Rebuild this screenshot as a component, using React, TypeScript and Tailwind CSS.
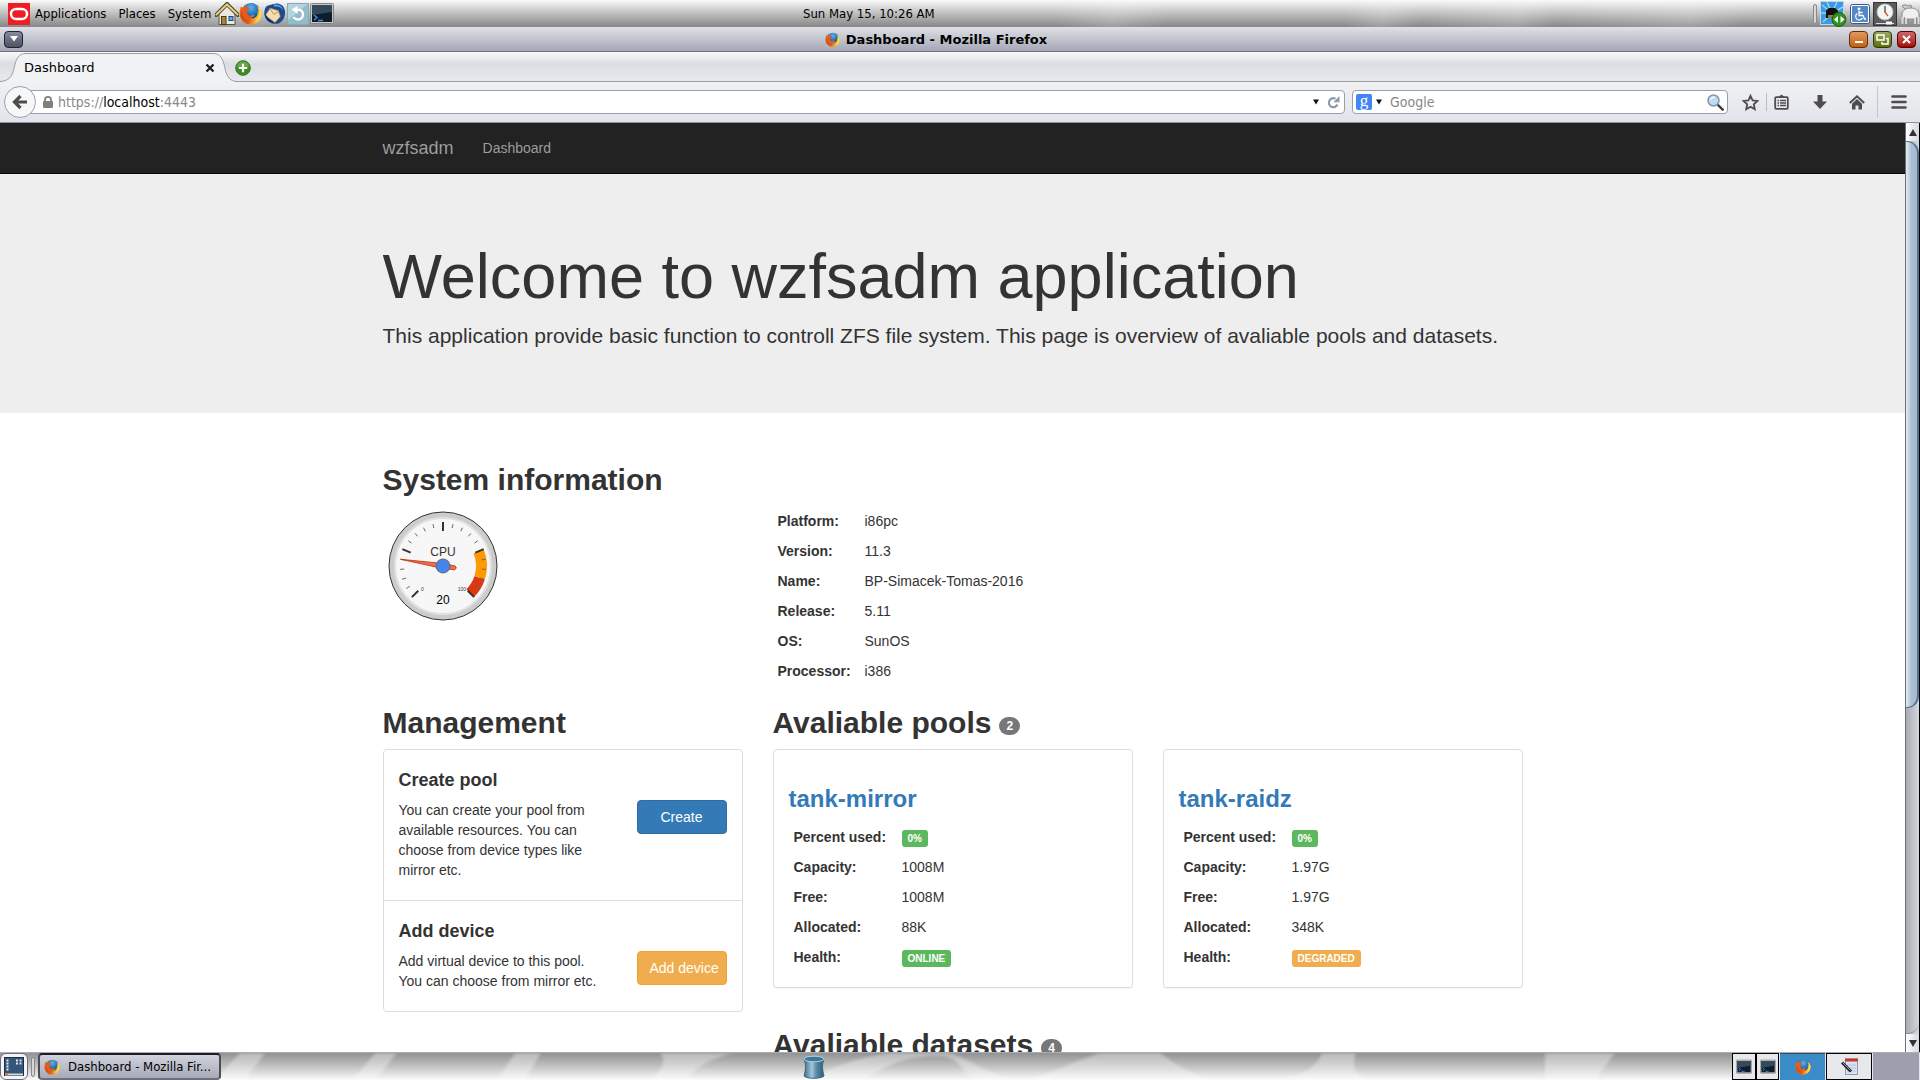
import React from "react";

/* ---------- icons ---------- */

function FirefoxIcon({ size }: { size: number }) {
  return (
    <svg width={size} height={size} viewBox="0 0 24 24" aria-hidden="true" className="shrink-0">
      <defs>
        <radialGradient id="ffGlobe" cx="0.5" cy="0.25" r="0.8">
          <stop offset="0" stopColor="#5fb4e8" />
          <stop offset="0.5" stopColor="#1d6cb5" />
          <stop offset="1" stopColor="#0b2355" />
        </radialGradient>
        <linearGradient id="ffTail" x1="0" y1="0" x2="1" y2="0.3">
          <stop offset="0" stopColor="#e8641a" />
          <stop offset="0.6" stopColor="#e4571a" />
          <stop offset="1" stopColor="#ffd23a" />
        </linearGradient>
      </defs>
      <circle cx="12.5" cy="11" r="10" fill="url(#ffGlobe)" />
      <path
        d="M2.2 4.6c.7.9 1.5 1.2 2.4 1.2C6 4.3 7.6 3.6 9 3.5 8.2 4.300 7.900 5.300 8.100 6.100c.9.3 2 .2 2.900.4-.1 1.200-1 1.700-2.300 2.300-.2.800.3 1.800-.500 2.700.9 2.700 3.200 3.400 5.300 2.400 1-.5 2-.4 2.400.3-1 1.700-3 2.400-4.700 2.100 3 1.500 6.600.3 7.800-2.500.7-1.800.5-3.300.1-4.600.6.400 1 .8 1.300 1.400.1-3-.9-5.300-2.800-7.300 3.800 2.200 6.100 6 5.600 10.300C22.500 19.500 17.800 23.500 12 23.500 5.600 23.500.700 18.700.700 12.300.700 9.400 1.200 6.700 2.200 4.600z"
        fill="url(#ffTail)"
      />
      <path d="M20.400 7.500c2 5.200.4 10.500-4.200 13.300 4.500-1 7-4.700 7-8.900 0-2.700-1.100-5-2.700-7z" fill="#ffdc4a" />
      <path d="M3.500 10c-.6 5 2 9.300 6.500 10.700C5.400 20.700 2 17 2 12.500z" fill="#b8331b" opacity="0.6" />
    </svg>
  );
}

function OracleIcon() {
  return (
    <svg width="22" height="22" viewBox="0 0 22 22" aria-hidden="true">
      <rect width="22" height="22" fill="#ee1c23" />
      <rect x="3" y="6" width="16" height="10" rx="5" fill="none" stroke="#fff" strokeWidth="2.500" />
    </svg>
  );
}

function HouseIcon() {
  return (
    <svg width="24" height="24" viewBox="0 0 24 24" aria-hidden="true">
      <path d="M4 11 12 3.500l8 7.500v11.500H4z" fill="#e9e9df" stroke="#55533f" />
      <path d="M1 13 12 2l11 11" fill="none" stroke="#4b4526" strokeWidth="4" strokeLinecap="round" />
      <path d="M1.500 12.500 12 2.500l10.500 10" fill="none" stroke="#e6d08a" strokeWidth="2" strokeLinecap="round" />
      <rect x="6.500" y="14.500" width="4.500" height="8" fill="#a88240" stroke="#4b3a16" />
      <rect x="14" y="14.500" width="4" height="4" fill="#6fa3d8" stroke="#234d80" />
    </svg>
  );
}

function ThunderbirdIcon() {
  return (
    <svg width="23" height="23" viewBox="0 0 24 24" aria-hidden="true">
      <path d="M12 2c4-1.500 9 1 10.500 5.500C24 13 22 20 16 22.500c-4 1-9-.5-12-3.500-3-4-3.500-9-1.500-13C3.500 4 6 3 12 2z" fill="#1b4a92" />
      <path d="M11 3c5-1.500 9 1 10 6-2-4-6-5-9-4z" fill="#5fa4dd" />
      <path d="m2.500 14 5-7.500 8.500 2.500 2 6-5.500 6.500z" fill="#f3ddb2" stroke="#c9974e" strokeWidth="0.700" />
      <path d="m7 7 4.500 6 5-3.500" fill="none" stroke="#c08a3d" />
      <path d="M1.500 12c1 6 6 10.500 13 9.500-5-.5-9-3.500-11-7.500z" fill="#10285c" />
    </svg>
  );
}

function RefreshTileIcon() {
  return (
    <svg width="22" height="22" viewBox="0 0 22 22" aria-hidden="true">
      <rect x="0.500" y="0.500" width="21" height="21" fill="#93bcca" stroke="#86abb8" />
      <path d="M1 1h20L1 17z" fill="#b4d3dc" />
      <path d="M8.500 7.500c3.500-2 7.500.3 7.500 4 0 3-2.300 5-5 5-1.800 0-3.500-.9-4.500-2.500" fill="none" stroke="#fff" strokeWidth="2.300" />
      <path d="m10.500 3-6 3.500 6 4.500z" fill="#fff" />
    </svg>
  );
}

function TerminalIcon({ size }: { size: number }) {
  return (
    <svg width={size} height={size} viewBox="0 0 24 24" aria-hidden="true">
      <rect x="0.500" y="1.500" width="23" height="20" rx="1" fill="#c9c9c5" stroke="#85857f" />
      <rect x="2" y="3" width="20" height="17" fill="#0e1c2b" />
      <path d="M2 3h20v7L2 13z" fill="#34495c" />
      <path d="m4 13 3 2.500L4 18M8 18.500h5" fill="none" stroke="#3e97e6" strokeWidth="1.300" />
    </svg>
  );
}

function NetworkIcon() {
  return (
    <svg width="27" height="26" viewBox="0 0 27 26" aria-hidden="true">
      <rect x="0.500" y="0.500" width="23" height="23" fill="#3a9be0" stroke="#bcd9ec" />
      <path d="M12 12 2 4M12 12 7 1M12 12l5-11M12 12l11-6M12 12 1 12M12 12l-9 9" stroke="#9ad0f2" strokeWidth="1.500" />
      <path d="M6 9.500 9 7h6l3 2.500V17H6z" fill="#111" />
      <rect x="8" y="14" width="7" height="3" fill="#9a7a3c" />
      <circle cx="19" cy="18.500" r="7" fill="#2f9220" stroke="#1c6412" />
      <path d="m18 15-4 3.500 4 3.500zM20.500 15l4 3.500-4 3.500z" fill="#fff" />
    </svg>
  );
}

function AccessibilityIcon() {
  return (
    <svg width="20" height="20" viewBox="0 0 20 20" aria-hidden="true">
      <rect x="0.500" y="0.500" width="19" height="19" rx="2" fill="#fff" stroke="#2f5b96" />
      <rect x="2" y="2" width="16" height="16" rx="1" fill="#5787c2" />
      <circle cx="9" cy="4.800" r="1.400" fill="#fff" />
      <path d="M9 6.500v5h4l1.500 3.500h1.500M9 8.500h3.500" fill="none" stroke="#fff" strokeWidth="1.300" />
      <path d="M7.300 9.500a3.500 3.500 0 1 0 5 4.500" fill="none" stroke="#fff" strokeWidth="1.200" />
    </svg>
  );
}

function TimeSliderIcon() {
  return (
    <svg width="24" height="24" viewBox="0 0 24 24" aria-hidden="true">
      <rect x="0.500" y="0.500" width="23" height="23" fill="#5b5b5b" stroke="#333" />
      <circle cx="12" cy="10" r="8" fill="#f4f4f2" stroke="#bbb" />
      <path d="M12 4v6.500" stroke="#444" strokeWidth="1.300" />
      <path d="m12 10 3 4" stroke="#d4552c" strokeWidth="1.300" />
      <path d="M3 21.500h18" stroke="#ddd" />
      <rect x="13" y="19.500" width="6" height="3" fill="#fff" />
    </svg>
  );
}

function PackageIcon() {
  return (
    <svg width="20" height="24" viewBox="0 0 20 24" aria-hidden="true">
      <path d="M2 4c3-3 6 1 9-1l1 5H6z" fill="#c9c9c6" stroke="#8d8d8a" />
      <path d="M2 13c0-5 4-7 9-7s8 3 8 7v4H2z" fill="#f0f0ee" stroke="#8d8d8a" />
      <path d="M2.500 15v7M6 16v6M15 16v6M18.500 15v7" stroke="#d8d8d5" strokeWidth="2" />
      <path d="M4.500 15v7M8 17v3h5v-3M16.700 15v7M1 22.500h18" fill="none" stroke="#8d8d8a" />
    </svg>
  );
}

function TrashIcon() {
  return (
    <svg width="22" height="24" viewBox="0 0 22 24" aria-hidden="true">
      <defs>
        <linearGradient id="bin" x1="0" x2="1">
          <stop offset="0" stopColor="#3d6c88" />
          <stop offset="0.400" stopColor="#a4c8da" />
          <stop offset="0.600" stopColor="#5d8da8" />
          <stop offset="1" stopColor="#2f5a75" />
        </linearGradient>
      </defs>
      <path d="M1 4c2 5 2 10 0 17 3 3 17 3 20 0-2-7-2-12 0-17z" fill="url(#bin)" stroke="#3a6580" />
      <ellipse cx="11" cy="4" rx="10" ry="2.800" fill="#3c7797" stroke="#b4d3e0" />
    </svg>
  );
}

function DesktopIcon() {
  return (
    <svg width="20" height="20" viewBox="0 0 20 20" aria-hidden="true">
      <rect x="0.500" y="0.500" width="19" height="18" fill="#34567a" stroke="#1d3046" />
      <path d="M2.500 3.500h2M2.500 6.500h2M2.500 9.500h2M2.500 12.500h2M12 3.500h2M15.500 3.500h2M12 6.500h2M15.500 6.500h2" stroke="#dfe8f1" strokeWidth="1.800" />
      <path d="M1 17.500h18" stroke="#d8d8d0" strokeWidth="2" />
      <rect x="1" y="16.500" width="3" height="2" fill="#e07b2a" />
    </svg>
  );
}

function NotesIcon() {
  return (
    <svg width="17" height="17" viewBox="0 0 17 17" aria-hidden="true">
      <rect x="4.500" y="1" width="12" height="15.500" fill="#d7e3f5" stroke="#8c9bb5" />
      <rect x="4" y="0.500" width="13" height="3" fill="#c0392f" />
      <path d="M6 7h9M6 10h9M6 13h9" stroke="#b4c6e4" />
      <path d="m1 4.500 9 9" stroke="#222" strokeWidth="3" />
      <path d="m1.500 4.500 8 8" stroke="#999" />
    </svg>
  );
}

const BackIcon = () => (
  <svg width="16" height="16" viewBox="0 0 16 16" aria-hidden="true">
    <path d="M8.500 2 2.500 8l6 6M3 8h12" fill="none" stroke="#4d4d4d" strokeWidth="3.200" />
  </svg>
);

const LockIcon = () => (
  <svg width="10" height="12" viewBox="0 0 10 12" aria-hidden="true">
    <rect y="5" width="10" height="7" rx="1" fill="#808080" />
    <path d="M2 6V3.500a3 2.600 0 0 1 6 0V6" fill="none" stroke="#808080" strokeWidth="1.800" />
  </svg>
);

const CaretIcon = () => (
  <svg width="6" height="6" viewBox="0 0 6 6" aria-hidden="true">
    <path d="M0 .500h6L3 5.500z" fill="#111" />
  </svg>
);

const ReloadIcon = () => (
  <svg width="13" height="13" viewBox="0 0 13 13" aria-hidden="true">
    <path d="M10.500 8.500A4.500 4.500 0 1 1 8.500 2.700" fill="none" stroke="#8e9bac" strokeWidth="2.200" />
    <path d="M12.500 0v6.200H6.300z" fill="#8e9bac" />
  </svg>
);

const SearchIcon = () => (
  <svg width="17" height="17" viewBox="0 0 17 17" aria-hidden="true">
    <path d="m10.500 10.500 5.200 5.200" stroke="#3a3a3a" strokeWidth="2.400" strokeLinecap="round" />
    <circle cx="6.500" cy="6.500" r="5.500" fill="#bcdcf4" stroke="#8895a5" strokeWidth="1.500" />
    <path d="M3.500 5.500a3.500 3.500 0 0 1 4-2" fill="none" stroke="#fff" strokeWidth="1.400" />
  </svg>
);

const StarIcon = () => (
  <svg width="17" height="17" viewBox="0 0 17 17" aria-hidden="true">
    <path d="m8.500 1.800 2.100 4.500 4.800.6-3.600 3.400 1 4.900-4.300-2.500-4.300 2.500 1-4.900L1.600 6.900l4.800-.6z" fill="none" stroke="#4d4d4d" strokeWidth="1.800" />
  </svg>
);

const ClipboardIcon = () => (
  <svg width="15" height="16" viewBox="0 0 15 16" aria-hidden="true">
    <rect x="1.200" y="3.200" width="12.600" height="11.600" rx="1" fill="none" stroke="#4d4d4d" strokeWidth="1.800" />
    <path d="M5 2.500 7.500.500 10 2.500V4H5z" fill="#4d4d4d" />
    <path d="M3.500 6.500h1.500M6 6.500h6M3.500 9h1.500M6 9h6M3.500 11.500h1.500M6 11.500h6" stroke="#4d4d4d" strokeWidth="1.300" />
  </svg>
);

const DownIcon = () => (
  <svg width="14" height="14" viewBox="0 0 14 14" aria-hidden="true">
    <path d="M4.500 0h5v6.500H14L7 14 0 6.500h4.500z" fill="#4d4d4d" />
  </svg>
);

const HomeIcon = () => (
  <svg width="16" height="15" viewBox="0 0 16 15" aria-hidden="true">
    <path d="M.8 8 8 1.300 15.200 8" fill="none" stroke="#4d4d4d" strokeWidth="1.900" />
    <path d="m8 4 5 4.800V14.500H9.500V10.500h-3v4H3V8.800z" fill="#4d4d4d" />
  </svg>
);

const MenuIcon = () => (
  <svg width="16" height="14" viewBox="0 0 16 14" aria-hidden="true">
    <path d="M1.500 1.500h13M1.500 7h13M1.500 12.500h13" stroke="#4d4d4d" strokeWidth="2.600" strokeLinecap="round" />
  </svg>
);

/* ---------- desktop panels ---------- */

const Handle = () => <span className="h-5 w-1 shrink-0 rounded-sm border border-[#8a8a8a] bg-[#d6d6d6]" />;

function TopPanel() {
  return (
    <header className="relative h-[27px] shrink-0 bg-linear-to-b from-[#fafafa] via-[#bfbfbf] to-[#868686] font-['DejaVu_Sans_Condensed','DejaVu_Sans',sans-serif] text-[13px] leading-[27px] text-black [font-stretch:condensed]">
      <div className="absolute inset-0 bg-[linear-gradient(100deg,transparent_8%,#ffffff30_13%,transparent_18%,transparent_55%,#ffffff30_58%,transparent_61%,transparent_70%,#ffffff30_72%,transparent_74%,#ffffff30_79%,transparent_81%,#ffffff30_88%,transparent_91%)]" />
      <div className="relative grid h-full grid-cols-[803fr_1117fr]">
        <div className="flex items-center pl-2">
          <OracleIcon />
          <nav className="ml-[5px] flex gap-3" aria-label="Desktop">
            <button>Applications</button>
            <button>Places</button>
            <button>System</button>
          </nav>
          <div className="ml-1 flex items-center">
            <button aria-label="Home folder"><HouseIcon /></button>
            <button aria-label="Firefox"><FirefoxIcon size={23} /></button>
            <button aria-label="Mail" className="ml-px"><ThunderbirdIcon /></button>
            <button aria-label="Updates" className="mx-px"><RefreshTileIcon /></button>
            <button aria-label="Terminal"><TerminalIcon size={24} /></button>
          </div>
        </div>
        <div className="flex items-center justify-between">
          <time>Sun May 15, 10:26 AM</time>
          <div className="flex items-center gap-[3px]">
            <Handle />
            <NetworkIcon />
            <AccessibilityIcon />
            <TimeSliderIcon />
            <PackageIcon />
          </div>
        </div>
      </div>
    </header>
  );
}

function BottomPanel() {
  return (
    <footer className="relative h-7 shrink-0 overflow-hidden border-t border-[#a9aeb6] bg-linear-to-b from-[#909293] via-[#c3c3c3] via-50% to-[#fbfbfb]">
      <svg className="absolute inset-0 h-full w-full" viewBox="0 0 1920 27" preserveAspectRatio="none" aria-hidden="true">
        <defs>
          <filter id="soft" x="-5%" y="-50%" width="110%" height="200%">
            <feGaussianBlur stdDeviation="1.500" />
          </filter>
        </defs>
        <g fill="#fff" opacity="0.350" filter="url(#soft)">
          <path d="M240 0h25l-20 27h-30zM375 0h22l-22 27h-22zM515 0h26l-16 27h-28zM660 0c8 9 0 20-10 27h35c10-12 25-22 50-27z" />
          <path d="M865 27c25-18 45-24 75-24 20 0 22 18 35 24h240c-25-5-40-16-55-27h-60c-35 12-55 24-80 27-30-3-40-16-70-27h-60c-30 4-60 14-80 27z" />
          <path d="M1322 0h34c-5 14 0 22 10 27h-90c28-4 40-12 46-27zM1545 0h70l-20 27h-50z" />
        </g>
      </svg>
      <div className="relative grid h-full grid-cols-[803fr_1117fr]">
        <div className="flex items-center gap-[3px]">
          <button aria-label="Show desktop" className="flex h-[27px] w-7 items-center justify-center rounded-md border border-[#6b6f7c] bg-[#f4f4f6]">
            <DesktopIcon />
          </button>
          <Handle />
          <button className="flex h-[27px] w-[183px] items-center gap-2 rounded border-2 border-[#1c1e26] border-x-[#4a4d58] border-b-[#6d707c] bg-linear-to-b from-[#d0d3dc] to-[#a7abb8] pl-1 font-['DejaVu_Sans_Condensed','DejaVu_Sans',sans-serif] text-[13px] whitespace-nowrap text-black [font-stretch:condensed]">
            <FirefoxIcon size={16} />
            Dashboard - Mozilla Fir...
          </button>
        </div>
        <div className="flex items-center justify-between">
          <button aria-label="Trash"><TrashIcon /></button>
          <div className="flex h-full bg-[#e7e8ec]">
            <button aria-label="Workspace 1" className="flex">
              <span className="flex h-full w-6 items-center justify-center border border-black"><TerminalIcon size={16} /></span>
              <span className="flex h-full w-[23px] items-center justify-center border border-black"><TerminalIcon size={16} /></span>
            </button>
            <button aria-label="Workspace 2" className="mx-px flex w-[45px] items-center justify-center border-t border-[#3c4752] bg-[#3a8bc6]"><FirefoxIcon size={16} /></button>
            <button aria-label="Workspace 3" className="flex w-[46px] items-center justify-center border border-black"><NotesIcon /></button>
            <button aria-label="Workspace 4" className="mx-px w-[46px] bg-[#9d9eae]" />
          </div>
        </div>
      </div>
    </footer>
  );
}

/* ---------- browser chrome ---------- */

function TitleBar() {
  return (
    <div className="flex h-[25px] shrink-0 items-center border-b border-[#6d7080] bg-linear-to-b from-[#dfe1e6] to-[#a5a8b5] px-1">
      <button aria-label="Window menu" className="flex h-[17px] w-[19px] items-center justify-center rounded border border-[#20242e] bg-linear-to-b from-[#868c9e] to-[#4c5264]">
        <svg width="8" height="6" viewBox="0 0 8 6" aria-hidden="true"><path d="M0 0h8L4 5.500z" fill="#fff" /></svg>
      </button>
      <div className="flex flex-1 items-center justify-center gap-1.5 pt-px">
        <FirefoxIcon size={15} />
        <span className="font-['DejaVu_Sans',sans-serif] text-[13px] leading-5 font-bold text-black">Dashboard - Mozilla Firefox</span>
      </div>
      <div className="flex gap-[5px]">
        <button aria-label="Minimize" className="flex h-[17px] w-[19px] items-end justify-center rounded border border-[#6d2c00] bg-linear-to-b from-[#dd9a5c] to-[#c35f00] pb-1">
          <span className="h-[2px] w-2 bg-white" />
        </button>
        <button aria-label="Restore" className="flex h-[17px] w-[19px] items-center justify-center rounded border border-[#2f3a00] bg-linear-to-b from-[#9aa85c] to-[#5b7000]">
          <svg width="13" height="11" viewBox="0 0 13 11" aria-hidden="true">
            <path d="M1 1h7v5H1zM10 4.500h2V10H6V8" fill="none" stroke="#fff" strokeWidth="1.500" />
          </svg>
        </button>
        <button aria-label="Close" className="flex h-[17px] w-[19px] items-center justify-center rounded border border-[#5a0000] bg-linear-to-b from-[#cf6666] to-[#a30000]">
          <svg width="9" height="9" viewBox="0 0 9 9" aria-hidden="true"><path d="m1 1 7 7M8 1 1 8" stroke="#fff" strokeWidth="2" /></svg>
        </button>
      </div>
    </div>
  );
}

function TabStrip() {
  return (
    <div className="relative flex h-[30px] shrink-0 bg-linear-to-b from-[#fafafb] via-[#dcdde2] via-40% to-[#e9eaed] font-['DejaVu_Sans',sans-serif] text-[13px] text-black shadow-[inset_0_-1px_0_#9b9da3]">
      <div className="relative w-[237px]">
        <svg className="absolute inset-0" width="237" height="30" viewBox="0 0 237 30" aria-hidden="true">
          <path d="M0 29.500c8-.5 12-4 14-13C16 6 19 1.500 26 1.500h187c7 0 10 4.500 12 15 2 9 5 12.500 12 13V30H0z" fill="#f1f2f4" />
          <path d="M0 29.500c8-.5 12-4 14-13C16 6 19 1.500 26 1.500h187c7 0 10 4.500 12 15 2 9 5 12.500 12 13" fill="none" stroke="#9b9da3" />
        </svg>
        <div className="relative flex h-full items-center justify-between pt-0.5 pr-[22px] pl-6">
          <span>Dashboard</span>
          <button aria-label="Close tab">
            <svg width="10" height="10" viewBox="0 0 10 10" aria-hidden="true"><path d="m1.500 1.500 7 7M8.500 1.500l-7 7" stroke="#222" strokeWidth="2.400" /></svg>
          </button>
        </div>
      </div>
      <button aria-label="New tab" className="-ml-0.5 pt-0.5">
        <svg width="16" height="16" viewBox="0 0 16 16" aria-hidden="true">
          <circle cx="8" cy="8" r="7.300" fill="#3a8e1f" stroke="#3c6f2c" />
          <path d="M2 7a6 5.500 0 0 1 12 0z" fill="#7fba66" opacity="0.600" />
          <path d="M8 3.800v8.400M3.800 8h8.400" stroke="#fff" strokeWidth="2.200" />
        </svg>
      </button>
    </div>
  );
}

const Divider = () => <span className="h-[18px] w-px bg-[#b9bcc4]" />;

function NavBar() {
  return (
    <div className="flex h-[41px] shrink-0 items-center border-b border-[#8f93a3] bg-linear-to-b from-[#f0f1f3] to-[#e2e4ea] pr-[13px] pl-1 font-['DejaVu_Sans_Condensed','DejaVu_Sans',sans-serif] text-[14px] [font-stretch:condensed]">
      <button aria-label="Back" className="relative z-10 flex size-8 shrink-0 items-center justify-center rounded-full border border-[#9aa0ae] bg-[#f6f7f9]">
        <BackIcon />
      </button>
      <div className="-ml-2 flex h-6 flex-1 items-center rounded-r-sm border border-[#999dac] bg-white pr-1 pl-[14px]">
        <LockIcon />
        <span className="ml-[5px] flex-1 text-[#888]">
          https://<span className="text-black">localhost</span>:4443
        </span>
        <button aria-label="History"><CaretIcon /></button>
        <button aria-label="Reload" className="ml-2"><ReloadIcon /></button>
      </div>
      <div className="ml-[7px] flex h-6 w-[376px] items-center rounded-sm border border-[#999dac] bg-white px-[3px]">
        <button aria-label="Search engine" className="flex items-center gap-1">
          <span className="flex size-4 items-center justify-center rounded-xs bg-[#4285f4] pb-1 font-['Liberation_Serif',serif] text-[17px] leading-none text-white">g</span>
          <CaretIcon />
        </button>
        <input aria-label="Search" placeholder="Google" className="ml-2 min-w-0 flex-1 outline-none placeholder:text-[#888]" />
        <button aria-label="Go"><SearchIcon /></button>
      </div>
      <div className="ml-[14px] flex items-center">
        <button aria-label="Bookmark"><StarIcon /></button>
        <span className="w-[7px]" />
        <Divider />
        <button aria-label="Bookmarks list" className="ml-[7px]"><ClipboardIcon /></button>
        <button aria-label="Downloads" className="ml-6"><DownIcon /></button>
        <button aria-label="Home page" className="mx-[22px]"><HomeIcon /></button>
      </div>
      <span className="-ml-2.5 h-8 w-px bg-[#c3c5cc]" />
      <button aria-label="Menu" className="ml-[13px]"><MenuIcon /></button>
    </div>
  );
}

function Scrollbar() {
  return (
    <div className="flex w-[15px] shrink-0 flex-col border-r border-l border-r-black border-l-[#6b6f76] bg-linear-to-r from-[#a9acb1] to-[#d4d7dc]" aria-hidden="true">
      <div className="flex h-[18px] items-center justify-center bg-linear-to-r from-white to-[#d5d7e2]">
        <svg width="8" height="7" viewBox="0 0 8 7"><path d="M4 0 8 7H0z" fill="#333" /></svg>
      </div>
      <div className="h-[61%] rounded-r-xl border-y border-r-2 border-[#56718a] bg-linear-to-r from-[#e6edf3] via-[#a9bfd3] via-50% to-[#a4bad0]" />
      <div className="flex-1 rounded-br-xl border-b border-[#8b8e94]" />
      <div className="flex h-[18px] items-center justify-center bg-linear-to-r from-white to-[#d5d7e2]">
        <svg width="8" height="7" viewBox="0 0 8 7"><path d="M0 0h8L4 7z" fill="#333" /></svg>
      </div>
    </div>
  );
}

/* ---------- web page ---------- */

const polar = (deg: number, r: number) => {
  const a = (deg * Math.PI) / 180;
  return `${(60 + r * Math.sin(a)).toFixed(2)} ${(60 - r * Math.cos(a)).toFixed(2)}`;
};

const band = (from: number, to: number) =>
  `M${polar(from, 44)}A44 44 0 0 1 ${polar(to, 44)}L${polar(to, 33)}A33 33 0 0 0 ${polar(from, 33)}z`;

function Gauge() {
  const ticks = Array.from({ length: 21 }, (_, i) => i);
  return (
    <svg width="120" height="120" viewBox="0 0 120 120" role="img" aria-label="CPU 20" className="font-['Liberation_Sans',sans-serif]">
      <circle cx="60" cy="60" r="54" fill="#ccc" stroke="#333" />
      <circle cx="60" cy="60" r="48" fill="#f7f7f7" stroke="#e0e0e0" strokeWidth="2" />
      <path d={band(67.5, 108)} fill="#ff9900" />
      <path d={band(108, 135)} fill="#dc3912" />
      {ticks.map((i) => {
        const deg = -135 + i * 13.5;
        const major = i % 5 === 0;
        return (
          <path
            key={i}
            d={`M${polar(deg, major ? 44 : 43)}L${polar(deg, major ? 35 : 39)}`}
            stroke={major ? "#333" : "#666"}
            strokeWidth={major ? 2 : 1}
          />
        );
      })}
      <text x="60" y="50" textAnchor="middle" fontSize="12" fill="#333">CPU</text>
      <text x="60" y="98" textAnchor="middle" fontSize="12" fill="#000">20</text>
      <text x="38" y="85" fontSize="5" fill="#333">0</text>
      <text x="83" y="85" textAnchor="end" fontSize="5" fill="#333">100</text>
      <g transform="rotate(-81 60 60)">
        <path d="M60 17 62.500 60 62 72q-2 3-4 0L57.500 60z" fill="#dc3912" fillOpacity="0.700" stroke="#c63310" strokeWidth="0.800" />
      </g>
      <circle cx="60" cy="60" r="7" fill="#4684ee" stroke="#666" />
    </svg>
  );
}

const Heading = ({ children, count }: { children: React.ReactNode; count?: number }) => (
  <h2 className="mt-5 mb-2.5 flex items-end text-[30px] leading-[33px] font-bold">
    {children}
    {count !== undefined && (
      <span className="mb-1 ml-2 rounded-[10px] bg-[#777] px-[7px] py-[3px] text-center text-[12px] leading-3 text-white">{count}</span>
    )}
  </h2>
);

function Facts({ rows, nameWidth }: { rows: [string, React.ReactNode][]; nameWidth: string }) {
  return (
    <table className="text-left">
      <tbody>
        {rows.map(([name, value]) => (
          <tr key={name}>
            <th scope="row" className={`p-[5px] font-bold whitespace-nowrap ${nameWidth}`}>{name}</th>
            <td className="p-[5px]">{value}</td>
          </tr>
        ))}
      </tbody>
    </table>
  );
}

const Label = ({ warn, children }: { warn?: boolean; children: React.ReactNode }) => (
  <span className={`mt-0.5 block w-fit rounded-[3px] px-1.5 text-[10px] leading-[17px] font-bold text-white ${warn ? "bg-[#f0ad4e]" : "bg-[#5cb85c]"}`}>
    {children}
  </span>
);

type Pool = { name: string; used: string; capacity: string; free: string; allocated: string; health: string };

const pools: Pool[] = [
  { name: "tank-mirror", used: "0%", capacity: "1008M", free: "1008M", allocated: "88K", health: "ONLINE" },
  { name: "tank-raidz", used: "0%", capacity: "1.97G", free: "1.97G", allocated: "348K", health: "DEGRADED" },
];

const system: [string, string][] = [
  ["Platform:", "i86pc"],
  ["Version:", "11.3"],
  ["Name:", "BP-Simacek-Tomas-2016"],
  ["Release:", "5.11"],
  ["OS:", "SunOS"],
  ["Processor:", "i386"],
];

function PoolCard({ pool }: { pool: Pool }) {
  return (
    <article className="rounded border border-[#ddd] p-[15px] shadow-[0_1px_1px_rgba(0,0,0,0.05)]">
      <h3 className="mt-5 mb-2.5 text-[24px] leading-[27px] font-bold">
        <a href="#" className="text-[#337ab7]">{pool.name}</a>
      </h3>
      <Facts
        nameWidth="w-[108px]"
        rows={[
          ["Percent used:", <Label key="u">{pool.used}</Label>],
          ["Capacity:", pool.capacity],
          ["Free:", pool.free],
          ["Allocated:", pool.allocated],
          ["Health:", <Label key="h" warn={pool.health !== "ONLINE"}>{pool.health}</Label>],
        ]}
      />
    </article>
  );
}

function Action({ title, text, button, tone }: { title: string; text: string; button: string; tone: string }) {
  return (
    <li className="px-[15px] py-2.5">
      <h4 className="mt-2.5 mb-2.5 text-[18px] leading-5 font-bold">{title}</h4>
      <div className="flex items-start justify-between">
        <p className="mb-2.5 w-[208px]">{text}</p>
        <button className={`h-[34px] w-[90px] rounded border px-3 whitespace-nowrap text-white ${tone}`}>{button}</button>
      </div>
    </li>
  );
}

function Page() {
  return (
    <div className="min-w-0 flex-1 overflow-hidden bg-white font-['Liberation_Sans',Arial,sans-serif] text-[14px] leading-5 text-[#333]">
      <nav className="h-[51px] border-b border-[#080808] bg-[#222] text-[#9d9d9d]">
        <div className="mx-auto flex h-full max-w-[1170px] items-center px-[15px]">
          <a href="#" className="text-[18px] leading-5">wzfsadm</a>
          <a href="#" className="ml-[29px]">Dashboard</a>
        </div>
      </nav>
      <header className="mb-[30px] bg-[#eee] py-12">
        <div className="mx-auto max-w-[1170px] px-[15px]">
          <h1 className="mt-5 mb-2.5 text-[63px] leading-[69px]">Welcome to wzfsadm application</h1>
          <p className="mb-[15px] text-[21px] leading-[29px]">
            This application provide basic function to controll ZFS file system. This page is overview of avaliable pools and datasets.
          </p>
        </div>
      </header>
      <main className="mx-auto flow-root max-w-[1170px] px-[15px]">
        <Heading>System information</Heading>
        <div className="grid grid-cols-3 gap-x-[30px]">
          <Gauge />
          <div className="col-span-2">
            <Facts rows={system} nameWidth="w-[87px]" />
          </div>
        </div>
        <div className="grid grid-cols-3 gap-x-[30px]">
          <section>
            <Heading>Management</Heading>
            <ul className="divide-y divide-[#ddd] rounded border border-[#ddd]">
              <Action
                title="Create pool"
                text="You can create your pool from available resources. You can choose from device types like mirror etc."
                button="Create"
                tone="border-[#2e6da4] bg-[#337ab7]"
              />
              <Action
                title="Add device"
                text="Add virtual device to this pool. You can choose from mirror etc."
                button="Add device"
                tone="border-[#eea236] bg-[#f0ad4e]"
              />
            </ul>
          </section>
          <section className="col-span-2">
            <Heading count={2}>Avaliable pools</Heading>
            <div className="mb-10 grid grid-cols-2 gap-x-[30px]">
              {pools.map((p) => (
                <PoolCard key={p.name} pool={p} />
              ))}
            </div>
            <Heading count={4}>Avaliable datasets</Heading>
          </section>
        </div>
      </main>
    </div>
  );
}

export default function App() {
  return (
    <div className="flex h-screen flex-col overflow-hidden bg-[#e7e8ec]">
      <TopPanel />
      <TitleBar />
      <TabStrip />
      <NavBar />
      <div className="flex min-h-0 flex-1">
        <Page />
        <Scrollbar />
      </div>
      <BottomPanel />
    </div>
  );
}
